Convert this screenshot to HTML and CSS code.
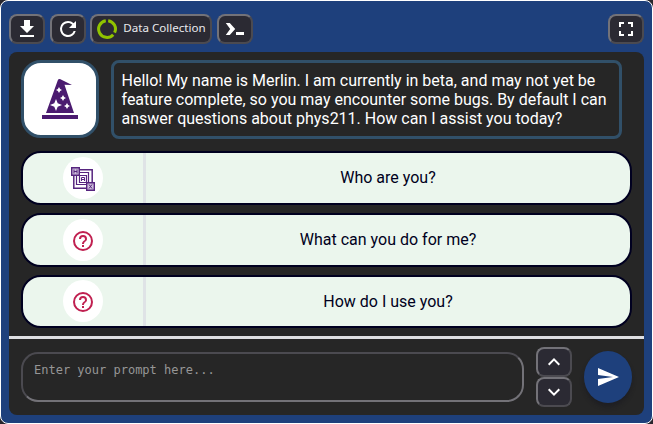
FILE: index.html
```html
<!DOCTYPE html>
<html lang="en">
<head>
<meta charset="utf-8">
<title>Merlin</title>
<link rel="stylesheet" href="styles.css">
</head>
<body>
<div class="window">
  <header class="toolbar">
    <button class="btn" aria-label="Download"><svg width="24" height="24" viewBox="0 0 24 24"><path fill="#fff" d="M9 3h6v6h4l-7 7-7-7h4zM5 18h14v2H5z"/></svg></button>
    <button class="btn" aria-label="Refresh"><svg width="24" height="24" viewBox="0 0 24 24"><path fill="#fff" d="M17.65 6.35A7.96 7.96 0 0 0 12 4a8 8 0 1 0 7.73 10h-2.08A6 6 0 1 1 12 6c1.66 0 3.14.69 4.22 1.78L13 11h7V4z"/></svg></button>
    <button class="btn data"><svg width="22" height="22" viewBox="0 0 22 22"><g fill="none" stroke="#91c400" stroke-width="3"><path d="M12.2 2.7A8.4 8.4 0 0 1 18.6 14.7"/><path d="M17.2 16.7A8.4 8.4 0 1 1 9.8 2.7"/></g></svg><span>Data Collection</span></button>
    <button class="btn" aria-label="Console"><svg width="24" height="24" viewBox="0 0 24 24"><path fill="#fff" d="M2.800 6h4l5.400 6-5.400 6h-4l4.400-6zM13 15h8v3h-8z"/></svg></button>
    <button class="btn full" aria-label="Fullscreen"><svg width="24" height="24" viewBox="0 0 24 24"><path fill="#fff" d="M7 14H5v5h5v-2H7zM5 10h2V7h3V5H5zm12 7h-3v2h5v-5h-2zM14 5v2h3v3h2V5z"/></svg></button>
  </header>
  <main class="panel">
    <section class="chat">
      <div class="message">
        <div class="avatar"><svg width="36" height="41" viewBox="0 0 36 41"><path fill="#4b1b70" d="M4 34 15.700 1.500Q16.500-.5 18.500.3L30 6l-7.500-.2L32 34zM0 36h36v4H0z"/><path fill="#fff" d="m17 8 1.100 1.900L20 11l-1.900 1.100L17 14l-1.100-1.900L14 11l1.900-1.100zm4 8 1.100 1.900L24 19l-1.900 1.100L21 22l-1.100-1.900L18 19l1.900-1.100zm4 8 1.100 1.900L28 27l-1.900 1.100L25 30l-1.100-1.900L22 27l1.900-1.100zM14 20l1.700 4.300L20 26l-4.300 1.700L14 32l-1.700-4.300L8 26l4.300-1.700z"/></svg></div>
        <div class="bubble">Hello! My name is Merlin. I am currently in beta, and may not yet be<br>feature complete, so you may encounter some bugs. By default I can<br>answer questions about phys211. How can I assist you today?</div>
      </div>
      <div class="suggestions">
        <button class="suggestion"><span class="lead"><span class="disc"><svg width="24" height="24" viewBox="0 0 24 24" fill="none"><path stroke="#57257f" stroke-width="1.500" d="M9 2.800h12.200V15M2.800 9v12.200H15"/><path stroke="#57257f" stroke-width="1.200" d="M9 5.500h8.500V15M5.500 9v8.500H15"/><path fill="#fff" stroke="#57257f" stroke-width="1.200" d="M8.500 8.500h7v7h-7z"/><path fill="#cdbddb" stroke="#57257f" stroke-width="1.400" d="M.7.700h7.600v7.600H.7zM15.700 15.700h7.600v7.600h-7.600z"/><path stroke="#57257f" d="M3 2.500v4M6 2.500v4M3 4.500h3M10.500 14v-3.500h3V14M10.500 12.500h3M18 17.500l3 4M21 17.500l-3 4"/></svg></span></span><span class="label">Who are you?</span></button>
        <button class="suggestion"><span class="lead"><span class="disc"><svg width="24" height="24" viewBox="0 0 24 24"><path fill="#c02050" d="M11 18h2v-2h-2zm1-16a10 10 0 1 0 0 20 10 10 0 0 0 0-20m0 18a8 8 0 1 1 0-16 8 8 0 0 1 0 16m0-14a4 4 0 0 0-4 4h2a2 2 0 1 1 4 0c0 2-3 1.750-3 5h2c0-2.250 3-2.500 3-5a4 4 0 0 0-4-4"/></svg></span></span><span class="label">What can you do for me?</span></button>
        <button class="suggestion"><span class="lead"><span class="disc"><svg width="24" height="24" viewBox="0 0 24 24"><path fill="#c02050" d="M11 18h2v-2h-2zm1-16a10 10 0 1 0 0 20 10 10 0 0 0 0-20m0 18a8 8 0 1 1 0-16 8 8 0 0 1 0 16m0-14a4 4 0 0 0-4 4h2a2 2 0 1 1 4 0c0 2-3 1.750-3 5h2c0-2.250 3-2.500 3-5a4 4 0 0 0-4-4"/></svg></span></span><span class="label">How do I use you?</span></button>
      </div>
    </section>
    <footer class="composer">
      <textarea class="prompt" placeholder="Enter your prompt here..."></textarea>
      <div class="steps">
        <button class="btn" aria-label="Previous"><svg width="24" height="24" viewBox="0 0 24 24"><path fill="none" stroke="#fff" stroke-width="2" d="m6.700 14.700 5.300-5.300 5.300 5.300"/></svg></button>
        <button class="btn" aria-label="Next"><svg width="24" height="24" viewBox="0 0 24 24"><path fill="none" stroke="#fff" stroke-width="2" d="m6.700 9.300 5.300 5.300 5.300-5.300"/></svg></button>
      </div>
      <button class="send" aria-label="Send"><svg width="24" height="24" viewBox="0 0 24 24"><path fill="#fff" d="M2 21 23 12 2 3v7l15 2-15 2z"/></svg></button>
    </footer>
  </main>
</div>
</body>
</html>
```
FILE: styles.css
```css
* { box-sizing: border-box; }
body { margin: 0; background: #29262d; font-family: Roboto, sans-serif; }
button { margin: 0; padding: 0; font-family: inherit; }
svg { display: block; flex: none; }
.window {
  height: 424px;
  padding: 0 8px 8px;
  border: 1px solid #fff;
  border-radius: 8px;
  background: #1e407c;
}
.toolbar { display: flex; height: 51px; padding-top: 13px; gap: 5px; }
.btn {
  display: flex;
  align-items: center;
  justify-content: center;
  flex: none;
  width: 36px;
  height: 30px;
  border: 2px solid;
  border-color: #737278 #4b4a50 #4b4a50 #737278;
  border-radius: 8px;
  background: #2b2a33;
}
.data {
  width: 122px;
  margin-left: -1px;
  gap: 5px;
  color: #e9e9ed;
  font: 11.6px "Noto Sans", sans-serif;
  white-space: nowrap;
}
.data span { padding-bottom: 3px; }
.full { margin-left: auto; }
.panel {
  height: 363px;
  border-radius: 8px;
  background: #262626;
  overflow: hidden;
}
.chat { height: 287px; padding: 8px 12px 0; border-bottom: 3px solid #dedfe2; }
.message { display: flex; gap: 12px; }
.avatar {
  display: flex;
  align-items: center;
  justify-content: center;
  width: 78px;
  height: 78px;
  border: 3px solid #315069;
  border-radius: 20px;
  background: #fff;
}
.bubble {
  width: 511px;
  height: 79px;
  padding: 8px 0 0 7.5px;
  border: 3px solid #315069;
  border-radius: 8px;
  color: #fff;
  font-size: 16px;
  line-height: 19px;
  white-space: nowrap;
}
.suggestions { display: grid; gap: 8px; margin-top: 12px; }
.suggestion {
  display: flex;
  width: 611px;
  height: 53.8px;
  border: 2px solid #000020;
  border-radius: 20px;
  background: #ebf6ed;
  color: #000020;
  font-size: 16px;
}
.lead {
  display: flex;
  align-items: center;
  justify-content: center;
  width: 123px;
  height: 100%;
  border-right: 3px solid #dfe3e6;
}
.disc {
  display: flex;
  align-items: center;
  justify-content: center;
  width: 40px;
  height: 42px;
  padding-top: 2px;
  border-radius: 50%;
  background: #fff;
}
.label { flex: 1; padding-top: 15.4px; line-height: 19px; text-align: center; }
.composer { display: flex; padding: 8px 12px 0; }
.prompt {
  width: 503px;
  height: 50px;
  margin: 5px 0 0;
  padding: 8px 11px;
  border: 2px solid;
  border-color: #4b4a50 #737278 #737278 #4b4a50;
  border-radius: 17px;
  background: transparent;
  color: #fff;
  font: 12px/16px "DejaVu Sans Mono", monospace;
  resize: none;
}
.prompt::placeholder { color: #969696; }
.steps { margin-left: 12px; }
.send {
  display: flex;
  align-items: center;
  justify-content: center;
  width: 48px;
  height: 52px;
  margin: 4px 0 0 12px;
  border: 0;
  border-radius: 50%;
  background: #1e407c;
  box-shadow: 0 4px 4px rgba(20, 20, 30, .4);
}
```
